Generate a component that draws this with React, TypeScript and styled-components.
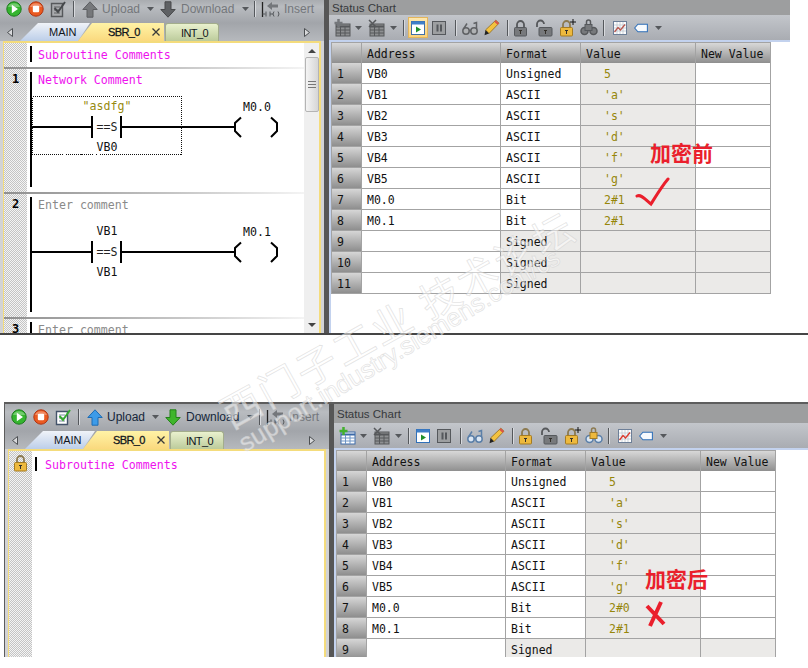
import styled, { createGlobalStyle } from 'styled-components';

const MONO = '"DejaVu Sans Mono", "Liberation Mono", monospace';
const UI = '"Liberation Sans", Arial, sans-serif';

const GlobalStyle = createGlobalStyle`
  html, body {
    margin: 0;
    background: #fff;
    font-family: ${UI};
  }
`;

const Page = styled.div`
  position: relative;
  width: 808px;
  height: 668px;
  overflow: hidden;
  background: #fff;
`;

const Shot = styled.section<{ $locked: boolean }>`
  display: flex;
  box-sizing: border-box;
  height: ${(p) => (p.$locked ? '255px' : '335px')};
  margin-top: ${(p) => (p.$locked ? '67px' : '0')};
  margin-left: ${(p) => (p.$locked ? '4px' : '0')};
  border-top: ${(p) => (p.$locked ? '2px solid #5d5d5d' : 'none')};
  border-left: ${(p) => (p.$locked ? '1px solid #5d5d5d' : 'none')};
  border-bottom: ${(p) => (p.$locked ? 'none' : '2px solid #454545')};
  overflow: hidden;
`;

const EditorPanel = styled.div`
  display: flex;
  flex-direction: column;
  flex: none;
  width: 324px;
  background: #d2d3d5;
`;

const Toolbar = styled.div<{ $locked: boolean }>`
  display: flex;
  align-items: center;
  flex: none;
  box-sizing: border-box;
  height: ${(p) => (p.$locked ? '27px' : '23px')};
  padding: ${(p) => (p.$locked ? '4px' : '0')} 0 5px 3px;
  background: linear-gradient(#a9acb0, #b9bcc0 30%, #a2a5aa);
`;

const Slot = styled.span<{ $w: number }>`
  display: flex;
  align-items: center;
  justify-content: center;
  flex: none;
  width: ${(p) => p.$w}px;
  height: 18px;
`;

const Separator = styled.span<{ $w: number }>`
  display: flex;
  justify-content: center;
  flex: none;
  width: ${(p) => p.$w}px;
  &::after {
    content: '';
    width: 1px;
    height: 16px;
    background: #55585c;
    box-shadow: 1px 0 0 #d8dade;
  }
`;

const ToolLabel = styled.span<{ $w: number; $on: boolean }>`
  flex: none;
  box-sizing: border-box;
  width: ${(p) => p.$w}px;
  padding-left: 1px;
  font-size: 12px;
  color: ${(p) => (p.$on ? '#15263a' : '#74777b')};
`;

const TabStrip = styled.div`
  display: flex;
  align-items: flex-end;
  flex: none;
  height: 18px;
  background: linear-gradient(#a2a5aa, #b6b9bd);
`;

const TabNav = styled.span`
  display: flex;
  align-items: center;
  justify-content: center;
  flex: none;
  width: 20px;
  height: 18px;
  color: #4c4f52;
`;

const TabNavEnd = styled(TabNav)`
  margin-left: auto;
  margin-right: 7px;
`;

const Tab = styled.div<{ $kind: 'main' | 'active' | 'int' }>`
  display: flex;
  align-items: center;
  flex: none;
  box-sizing: border-box;
  height: 18px;
  font-size: 11px;
  color: #10151c;
  ${(p) =>
    p.$kind === 'main' &&
    `
    width: 70px;
    padding-left: 29px;
    background: linear-gradient(#f0f3f8, #bccee9);
    clip-path: polygon(0 100%, 18px 0, 100% 0, 58px 100%);
  `}
  ${(p) =>
    p.$kind === 'active' &&
    `
    position: relative;
    width: 86px;
    margin-left: -12px;
    padding-left: 30px;
    letter-spacing: -0.6px;
    -webkit-text-stroke: 0.3px #10151c;
    background: linear-gradient(#fff3a6, #fad97e);
    clip-path: polygon(0 100%, 14px 0, 100% 0, 100% 100%);
  `}
  ${(p) =>
    p.$kind === 'int' &&
    `
    width: 54px;
    margin-left: 1px;
    padding-left: 15px;
    letter-spacing: -0.6px;
    border-radius: 3px 3px 0 0;
    border: 1px solid #a3ad8c;
    border-bottom: none;
    background: linear-gradient(#e9f1ce, #bccb9b);
  `}
`;

const TabClose = styled.svg`
  flex: none;
  margin-left: 12px;
`;

const Editor = styled.div`
  display: flex;
  flex: 1;
  min-height: 0;
  margin-left: 3px;
  width: 318px;
  box-sizing: border-box;
  border-top: 2px solid #f4dc7c;
  border-left: 1px solid #f4dc7c;
  border-right: 2px solid #f4dc7c;
  background: #fff;
  overflow: hidden;
`;

const Networks = styled.div`
  flex: 1;
  min-width: 0;
  height: 100%;
`;

const NetworkRow = styled.div<{ $h: number }>`
  display: flex;
  height: ${(p) => p.$h}px;
`;

const LockedRow = styled.div`
  display: flex;
  height: 100%;
`;

const Gutter = styled.div`
  display: flex;
  justify-content: center;
  flex: none;
  box-sizing: border-box;
  width: 23px;
  padding-top: 3px;
  background: repeating-conic-gradient(#c4c4c4 0 25%, #f4f4f4 0 50%) 0 0 / 2px 2px;
  font: 700 12px ${MONO};
  color: #000;
`;

const Rail = styled.div<{ $head?: number; $tail: number }>`
  flex: none;
  width: 2px;
  margin: ${(p) => p.$head ?? 3}px 0 ${(p) => p.$tail}px 3px;
  background: #000;
`;

const NetworkBody = styled.div`
  flex: 1;
  min-width: 0;
`;

const Comment = styled.div<{ $tone: 'magenta' | 'grey'; $top: number; $left?: number }>`
  padding: ${(p) => p.$top}px 0 0 ${(p) => p.$left ?? 6}px;
  font: 11.6px/16px ${MONO};
  white-space: nowrap;
  color: ${(p) => (p.$tone === 'magenta' ? '#ee11ee' : '#8a8a8a')};
`;

const RungSvg = styled.svg`
  display: block;
  margin-top: 4px;
  font: 11.6px ${MONO};
`;

const NetworkDivider = styled.div`
  height: 2px;
  background: linear-gradient(90deg, #8f8f8f, #c8c8c8 60%, #f4f4f4);
`;

const Scrollbar = styled.div`
  display: flex;
  flex-direction: column;
  align-items: center;
  flex: none;
  width: 15px;
  background: #efefef;
`;

const ScrollThumb = styled.div`
  display: flex;
  align-items: center;
  justify-content: center;
  box-sizing: border-box;
  width: 14px;
  height: 55px;
  margin: 4px 0 auto;
  border: 1px solid #b4b4b4;
  border-radius: 2px;
  background: linear-gradient(90deg, #f4f4f4, #d6d6d6);
`;

const ScrollArrow = styled.span<{ $up: boolean }>`
  flex: none;
  width: 0;
  height: 0;
  margin: ${(p) => (p.$up ? '6px' : '0')} 0 ${(p) => (p.$up ? '0' : '6px')};
  border-left: 4px solid transparent;
  border-right: 4px solid transparent;
  ${(p) => (p.$up ? 'border-bottom' : 'border-top')}: 4px solid #444;
`;

const PanelDivider = styled.div`
  flex: none;
  width: 5px;
  background: #565656;
`;

const ChartPanel = styled.div<{ $barWidth: number }>`
  position: relative;
  flex: 1;
  min-width: 0;
  background: #fff;
  & > header {
    width: ${(p) => p.$barWidth}px;
  }
`;

const ChartTitle = styled.div<{ $h: number }>`
  display: flex;
  align-items: center;
  box-sizing: border-box;
  height: ${(p) => p.$h}px;
  padding-left: 3px;
  background: #9d9e9f;
  font-size: 11.5px;
  color: #36393c;
`;

const ChartTools = styled.div`
  display: flex;
  align-items: center;
  box-sizing: border-box;
  height: 25px;
  padding-left: 3px;
  background: linear-gradient(#c3c6cb, #a9acb2);
`;

const ActiveBox = styled.span`
  display: flex;
  align-items: center;
  justify-content: center;
  flex: none;
  width: 20px;
  height: 21px;
  border: 1px solid #e3b55c;
  box-sizing: border-box;
  background: linear-gradient(#fde7ae, #fbd27a);
`;

const BlueStrip = styled.div`
  height: 2px;
  background: #c3d2ee;
`;

const ChartBody = styled.div`
  height: 100%;
  border-left: 2px solid #c3d2ee;
`;

const Sheet = styled.table`
  table-layout: fixed;
  width: 440px;
  border-collapse: separate;
  border-spacing: 0;
  font: 11.5px ${MONO};
  color: #111;
  border-left: 1px solid #a3a3a3;
`;

const HeadCell = styled.th<{ $w: number }>`
  box-sizing: border-box;
  width: ${(p) => p.$w}px;
  height: 21px;
  padding: 2px 0 0 5px;
  border-top: 1px solid #a3a3a3;
  border-right: 1px solid #a3a3a3;
  background: linear-gradient(#d8d8d8, #8f8f8f);
  font-weight: 400;
  text-align: left;
`;

const RowHead = styled.td`
  box-sizing: border-box;
  height: 21px;
  padding: 2px 0 0 5px;
  border-bottom: 1px solid #a3a3a3;
  border-right: 1px solid #a3a3a3;
  background: linear-gradient(#d6d6d6, #8e8e8e);
`;

const Cell = styled.td<{ $shade?: boolean }>`
  box-sizing: border-box;
  height: 21px;
  padding: 2px 0 0 5px;
  border-bottom: 1px solid #a3a3a3;
  border-right: 1px solid #a3a3a3;
  background: ${(p) => (p.$shade ? '#ebeae8' : '#fff')};
`;

const ValueCell = styled(Cell)`
  padding-left: 23px;
  color: #96860a;
`;

const Note = styled.div<{ $x: number; $y: number }>`
  position: absolute;
  left: ${(p) => p.$x}px;
  top: ${(p) => p.$y}px;
  font: 700 21px/24px "Noto Sans CJK SC", sans-serif;
  color: #ea1f2c;
  white-space: nowrap;
`;

const Scribble = styled.svg<{ $x: number; $y: number }>`
  position: absolute;
  left: ${(p) => p.$x}px;
  top: ${(p) => p.$y}px;
`;

const Watermark = styled.div`
  position: absolute;
  transform-origin: 0 0;
  white-space: nowrap;
  pointer-events: none;
  color: rgba(255, 255, 255, 0.5);
  -webkit-text-stroke: 0.8px rgba(205, 205, 205, 0.55);
`;

const WatermarkCn = styled(Watermark)`
  left: 211px;
  top: 394px;
  transform: rotate(-29deg);
  font: 40px/48px "Noto Sans CJK SC", sans-serif;
  letter-spacing: 3px;
`;

const WatermarkEn = styled(Watermark)`
  left: 233px;
  top: 432px;
  transform: rotate(-31deg);
  font: 25.5px/30px ${UI};
`;

// toolbar drawings

const Round = ({ fill, dark, stop }: { fill: string; dark: string; stop?: boolean }) => (
  <svg width="16" height="16" viewBox="0 0 16 16">
    <circle cx="8" cy="8" r="7.2" fill={fill} stroke={dark} />
    <path d="M2 6a6.2 5 0 0 1 12 0z" fill="#fff" opacity=".3" />
    {stop ? <rect x="4.8" y="4.8" width="6.4" height="6.4" rx="1.2" fill="#fff" /> : <path d="M5.8 3.8 12 8l-6.2 4.2z" fill="#fff" />}
  </svg>
);

const CheckDoc = ({ on }: { on: boolean }) => (
  <svg width="17" height="18" viewBox="0 0 17 18">
    <path d="M1.5 3.5h11v13h-11z" fill={on ? '#fff' : '#a8aaad'} stroke={on ? '#44536a' : '#56585b'} strokeWidth="1.4" />
    <path d="M4 7h6M4 10h5M4 13h6" stroke={on ? '#7a8aa0' : '#606265'} />
    <path d="M4.5 8 8 12l7-10" fill="none" stroke={on ? '#35a82f' : '#45484b'} strokeWidth="2" />
  </svg>
);

const BlockArrow = ({ dir, fill, dark }: { dir: 'up' | 'down'; fill: string; dark: string }) => (
  <svg width="16" height="17" viewBox="0 0 16 17" style={{ transform: dir === 'down' ? 'scaleY(-1)' : undefined }}>
    <path d="M8 .8 15.2 8.5H11V16.2H5V8.5H.8z" fill={fill} stroke={dark} strokeWidth="1" />
  </svg>
);

const Caret = () => (
  <svg width="7" height="4" viewBox="0 0 7 4">
    <path d="M0 0h7L3.5 4z" fill="#55585c" />
  </svg>
);

const InsertIcon = () => (
  <svg width="20" height="17" viewBox="0 0 20 17">
    <path d="M1.5 1v15" stroke="#222" strokeWidth="1.3" />
    <path d="M1.5 13h3M5 10.500v5M9 10.500v5M9 13h3M13 10.500l-1 2.500 1 2.500M17 10.500l1 2.500-1 2.500" fill="none" stroke="#55585c" />
    <path d="M6 5 11 1v2.500h6v3h-6V9z" fill="#74777b" />
  </svg>
);

const GridIcon = ({ color, mark }: { color: string; mark?: 'plus' | 'cross' }) => (
  <svg width="17" height="18" viewBox="0 0 17 18">
    <rect x="2" y="5" width="14" height="12" fill={color === 'blue' ? '#fff' : '#8d8f91'} stroke={color === 'blue' ? '#3c6aa8' : '#56585b'} />
    <path d="M2 7.500h14" stroke={color === 'blue' ? '#3c6aa8' : '#56585b'} strokeWidth="2" />
    <path d="M6.500 8v9M11 8v9M2 11h14M2 14h14" stroke={color === 'blue' ? '#6f95c6' : '#56585b'} />
    {mark === 'plus' && <path d="M4.500 0v8M.5 4h8" stroke={color === 'blue' ? '#43b02e' : '#74777b'} strokeWidth="2.500" />}
    {mark === 'cross' && <path d="M1 1l7 7M8 1 1 8" stroke="#56585b" strokeWidth="1.500" />}
  </svg>
);

const RunBox = ({ on }: { on: boolean }) => (
  <svg width="14" height="14" viewBox="0 0 14 14">
    <rect x=".5" y=".5" width="13" height="13" fill="#fff" stroke={on ? '#2f6fb8' : '#3f6ea8'} />
    <rect x=".5" y=".5" width="13" height="3" fill="#3f7fc8" />
    <path d="M5 5.500 10 8.500 5 11.500z" fill="#1f8f2a" />
  </svg>
);

const PauseBox = () => (
  <svg width="14" height="14" viewBox="0 0 14 14">
    <rect x=".5" y=".5" width="13" height="13" fill="#9d9fa1" stroke="#55585c" />
    <path d="M4.500 3.500h2v7h-2zM8 3.500h2v7H8z" fill="#55585c" />
  </svg>
);

const Glasses = ({ on }: { on: boolean }) => (
  <svg width="16" height="16" viewBox="0 0 16 16" fill="none" stroke={on ? '#5b7fa8' : '#606265'} strokeWidth="1.500">
    <circle cx="4" cy="11" r="3.200" fill={on ? '#dbe7f4' : '#b0b2b4'} />
    <circle cx="12" cy="11" r="3.200" fill={on ? '#dbe7f4' : '#b0b2b4'} />
    <path d="M7 10.500h2M1.500 9 5 3.500M14.500 9V2.500l-3 1" />
  </svg>
);

const Pencil = () => (
  <svg width="16" height="17" viewBox="0 0 16 17">
    <path d="M11.800 1.200 15 4.200 5 14.500 1.500 11z" fill="#f3c23f" stroke="#8f6a1c" strokeWidth=".8" />
    <path d="M11.800 1.200 15 4.200 13.500 5.800 10.200 2.800z" fill="#d9534a" />
    <path d="M1.500 11 5 14.500 .5 16.200z" fill="#222" />
  </svg>
);

const Lock = ({ gold, open, plus }: { gold: boolean; open?: boolean; plus?: boolean }) => (
  <svg width="18" height="18" viewBox="0 0 18 18">
    <path d={open ? 'M2 8V5a3.500 3.500 0 0 1 7 0' : 'M5 9V5.500a3.500 3.500 0 0 1 7 0V9'} fill="none" stroke={gold ? '#8c7a50' : '#56585b'} strokeWidth="1.800" />
    <rect x={open ? 4 : 2.500} y="8.500" width={open ? 13 : 12} height="8.500" rx="1" fill={gold ? '#edb93e' : '#77797c'} stroke={gold ? '#a47b22' : '#55585c'} />
    <path d={open ? 'M9 11.500h3M10.500 11v4' : 'M7 11.500h3M8.500 11v4'} stroke="#33302a" />
    {plus && <path d="M15 0v6M12 3h6" stroke="#111" />}
  </svg>
);

const LockedGlasses = ({ on }: { on: boolean }) => (
  <svg width="18" height="18" viewBox="0 0 18 18" fill="none" strokeWidth="1.500">
    <circle cx="4.500" cy="12" r="3.500" fill={on ? '#dbe7f4' : '#77797c'} stroke={on ? '#5b7fa8' : '#56585b'} />
    <circle cx="13.500" cy="12" r="3.500" fill={on ? '#dbe7f4' : '#77797c'} stroke={on ? '#5b7fa8' : '#56585b'} />
    <rect x="5" y="5.500" width="7" height="6" fill={on ? '#edb93e' : '#77797c'} stroke={on ? '#a47b22' : '#55585c'} strokeWidth="1" />
    <path d="M6.500 5.500V3a2 2 0 0 1 4 0v2.500" stroke={on ? '#8c7a50' : '#56585b'} />
  </svg>
);

const TrendIcon = ({ on }: { on: boolean }) => (
  <svg width="14" height="14" viewBox="0 0 14 14">
    <rect x=".5" y=".5" width="13" height="13" fill="#fdfdfd" stroke="#6d7f98" />
    <path d="M1 4h12M1 7h12M1 10h12M4 1v12M7 1v12M10 1v12" stroke="#b6c0cc" strokeWidth=".7" />
    <path d="M1.500 11 5 6.500 7.500 9 12 3.500" fill="none" stroke={on ? '#dc3a2e' : '#b8574f'} strokeWidth="1.300" />
  </svg>
);

const TagIcon = () => (
  <svg width="16" height="10" viewBox="0 0 16 10">
    <path d="M4.500.7H15.300V9.300H4.500L.7 5z" fill="#f7fafd" stroke="#2f6fb8" strokeWidth="1.200" />
  </svg>
);

const NavArrow = ({ left }: { left: boolean }) => (
  <svg width="6" height="9" viewBox="0 0 6 9">
    <path d={left ? 'M5.500.5v8L.5 4.500z' : 'M.5.5v8l5-4z'} fill="#d8d9db" stroke="#4c4f52" />
  </svg>
);

// ladder rung, drawn relative to the left rail

interface RungProps {
  top: string;
  topTone: string;
  bottom: string;
  coil: string;
  selected?: boolean;
}

const Rung = ({ top, topTone, bottom, coil, selected }: RungProps) => (
  <RungSvg width="270" height="70" viewBox="0 0 270 70">
    {selected && <rect x=".5" y="4.500" width="149" height="58" fill="none" stroke="#111" strokeDasharray="1 1" shapeRendering="crispEdges" />}
    <path d="M0 35h59M90 35h112" stroke="#000" strokeWidth="2" />
    <path d="M60 24v22M89 24v22" stroke="#000" strokeWidth="2" />
    <path d="M209 25.500 203 31v8l6 6M239 25.500l6 5.500v8l-6 6" fill="none" stroke="#000" strokeWidth="2" />
    <text x="75" y="39" textAnchor="middle" fill="#222">==S</text>
    <text x="75" y="18" textAnchor="middle" fill={topTone}>{top}</text>
    <text x="75" y="59" textAnchor="middle" fill="#111">{bottom}</text>
    <text x="225" y="19" textAnchor="middle" fill="#111">{coil}</text>
  </RungSvg>
);

// status chart data

type Row = [string, string, string];

const ROWS: Row[] = [
  ['VB0', 'Unsigned', '5'],
  ['VB1', 'ASCII', "'a'"],
  ['VB2', 'ASCII', "'s'"],
  ['VB3', 'ASCII', "'d'"],
  ['VB4', 'ASCII', "'f'"],
  ['VB5', 'ASCII', "'g'"],
  ['M0.0', 'Bit', '2#1'],
  ['M0.1', 'Bit', '2#1'],
  ['', 'Signed', ''],
  ['', 'Signed', ''],
  ['', 'Signed', ''],
];

const StatusSheet = ({ rows }: { rows: Row[] }) => (
  <Sheet>
    <thead>
      <tr>
        <HeadCell $w={30} />
        <HeadCell $w={139}>Address</HeadCell>
        <HeadCell $w={80}>Format</HeadCell>
        <HeadCell $w={115}>Value</HeadCell>
        <HeadCell $w={75}>New Value</HeadCell>
      </tr>
    </thead>
    <tbody>
      {rows.map(([address, format, value], i) => (
        <tr key={i}>
          <RowHead>{i + 1}</RowHead>
          <Cell>{address}</Cell>
          <Cell $shade={!address}>{format}</Cell>
          <ValueCell $shade>{value}</ValueCell>
          <Cell $shade={!address} />
        </tr>
      ))}
    </tbody>
  </Sheet>
);

const EditorToolbar = ({ on }: { on: boolean }) => (
  <Toolbar $locked={on}>
    <Slot $w={22}><Round fill="#35b52f" dark="#1c7a1c" /></Slot>
    <Slot $w={22}><Round fill="#ea5a20" dark="#b03412" stop /></Slot>
    <Slot $w={22}><CheckDoc on={on} /></Slot>
    <Separator $w={8} />
    <Slot $w={2} />
    <Slot $w={22}><BlockArrow dir="up" fill={on ? '#3d9be8' : '#76787b'} dark={on ? '#1d6cb4' : '#5c5e61'} /></Slot>
    <ToolLabel $w={43} $on={on}>Upload</ToolLabel>
    <Slot $w={12}><Caret /></Slot>
    <Slot $w={24}><BlockArrow dir="down" fill={on ? '#3fb52c' : '#5f6164'} dark={on ? '#24801a' : '#48494b'} /></Slot>
    <ToolLabel $w={60} $on={on}>Download</ToolLabel>
    <Slot $w={10}><Caret /></Slot>
    <Separator $w={8} />
    <Slot $w={25}><InsertIcon /></Slot>
    <ToolLabel $w={34} $on={false}>Insert</ToolLabel>
  </Toolbar>
);

const EditorTabs = () => (
  <TabStrip>
    <TabNav><NavArrow left /></TabNav>
    <Tab $kind="main">MAIN</Tab>
    <Tab $kind="active">
      SBR_0
      <TabClose width="8" height="8" viewBox="0 0 8 8">
        <path d="M.5.5l7 7M7.500.5l-7 7" stroke="#3a3a3a" strokeWidth="1.300" />
      </TabClose>
    </Tab>
    <Tab $kind="int">INT_0</Tab>
    <TabNavEnd><NavArrow left={false} /></TabNavEnd>
  </TabStrip>
);

const ChartHeader = ({ on, title }: { on: boolean; title: number }) => (
  <header>
    <ChartTitle $h={title}>Status Chart</ChartTitle>
    <ChartTools>
      <Slot $w={20}><GridIcon color={on ? 'blue' : 'grey'} mark="plus" /></Slot>
      <Slot $w={12}><Caret /></Slot>
      <Slot $w={24}><GridIcon color="grey" mark="cross" /></Slot>
      <Slot $w={10}><Caret /></Slot>
      <Separator $w={10} />
      {on ? <Slot $w={20}><RunBox on /></Slot> : <ActiveBox><RunBox on={false} /></ActiveBox>}
      <Slot $w={22}><PauseBox /></Slot>
      <Separator $w={10} />
      <Slot $w={20}><Glasses on={on} /></Slot>
      <Slot $w={24}><Pencil /></Slot>
      <Separator $w={6} />
      <Slot $w={22}><Lock gold={on} /></Slot>
      <Slot $w={24}><Lock gold={false} open /></Slot>
      <Slot $w={22}><Lock gold plus /></Slot>
      <Slot $w={22}><LockedGlasses on={on} /></Slot>
      <Separator $w={6} />
      <Slot $w={28}><TrendIcon on={on} /></Slot>
      <Slot $w={14}><TagIcon /></Slot>
      <Slot $w={20}><Caret /></Slot>
    </ChartTools>
    <BlueStrip />
  </header>
);

const App = () => (
  <Page>
    <GlobalStyle />

    <Shot $locked={false}>
      <EditorPanel>
        <EditorToolbar on={false} />
        <EditorTabs />
        <Editor>
          <Networks>
            <NetworkRow $h={24}>
              <Gutter />
              <Rail $tail={5} />
              <NetworkBody>
                <Comment $tone="magenta" $top={4}>Subroutine Comments</Comment>
              </NetworkBody>
            </NetworkRow>
            <NetworkDivider />
            <NetworkRow $h={123}>
              <Gutter>1</Gutter>
              <Rail $tail={5} />
              <NetworkBody>
                <Comment $tone="magenta" $top={3}>Network Comment</Comment>
                <Rung top={'"asdfg"'} topTone="#978a10" bottom="VB0" coil="M0.0" selected />
              </NetworkBody>
            </NetworkRow>
            <NetworkDivider />
            <NetworkRow $h={123}>
              <Gutter>2</Gutter>
              <Rail $tail={5} />
              <NetworkBody>
                <Comment $tone="grey" $top={3}>Enter comment</Comment>
                <Rung top="VB1" topTone="#111" bottom="VB1" coil="M0.1" />
              </NetworkBody>
            </NetworkRow>
            <NetworkDivider />
            <NetworkRow $h={20}>
              <Gutter>3</Gutter>
              <Rail $tail={0} />
              <NetworkBody>
                <Comment $tone="grey" $top={3}>Enter comment</Comment>
              </NetworkBody>
            </NetworkRow>
          </Networks>
          <Scrollbar>
            <ScrollArrow $up />
            <ScrollThumb>
              <svg width="8" height="7" viewBox="0 0 8 7">
                <path d="M0 .5h8M0 3.500h8M0 6.500h8" stroke="#777" />
              </svg>
            </ScrollThumb>
            <ScrollArrow $up={false} />
          </Scrollbar>
        </Editor>
      </EditorPanel>
      <PanelDivider />
      <ChartPanel $barWidth={461}>
        <ChartHeader on={false} title={15} />
        <ChartBody>
          <StatusSheet rows={ROWS} />
        </ChartBody>
        <Note $x={321} $y={140}>加密前</Note>
        <Scribble $x={306} $y={176} width="36" height="32" viewBox="0 0 36 32">
          <path d="M2 20c4-2 8 3 14 8 5-8 11-18 17-25" fill="none" stroke="#ea1f2c" strokeWidth="3" strokeLinecap="round" />
        </Scribble>
      </ChartPanel>
    </Shot>

    <Shot $locked>
      <EditorPanel>
        <EditorToolbar on />
        <EditorTabs />
        <Editor>
          <Networks>
            <LockedRow>
              <Gutter>
                <Lock gold />
              </Gutter>
              <Rail $head={6} $tail={186} />
              <NetworkBody>
                <Comment $tone="magenta" $top={6} $left={8}>Subroutine Comments</Comment>
              </NetworkBody>
            </LockedRow>
          </Networks>
        </Editor>
      </EditorPanel>
      <PanelDivider />
      <ChartPanel $barWidth={475}>
        <ChartHeader on title={19} />
        <ChartBody>
          <StatusSheet rows={ROWS.slice(0, 9).map((r, i) => (i === 6 ? ['M0.0', 'Bit', '2#0'] : r))} />
        </ChartBody>
        <Note $x={311} $y={162}>加密后</Note>
        <Scribble $x={311} $y={196} width="22" height="28" viewBox="0 0 22 28">
          <path d="M2 6 19 24M16 2 5 26" fill="none" stroke="#ea1f2c" strokeWidth="4" />
        </Scribble>
      </ChartPanel>
    </Shot>

    <WatermarkCn>西门子工业&nbsp;技术论坛</WatermarkCn>
    <WatermarkEn>support.industry.siemens.com/cs</WatermarkEn>
  </Page>
);

export default App;
